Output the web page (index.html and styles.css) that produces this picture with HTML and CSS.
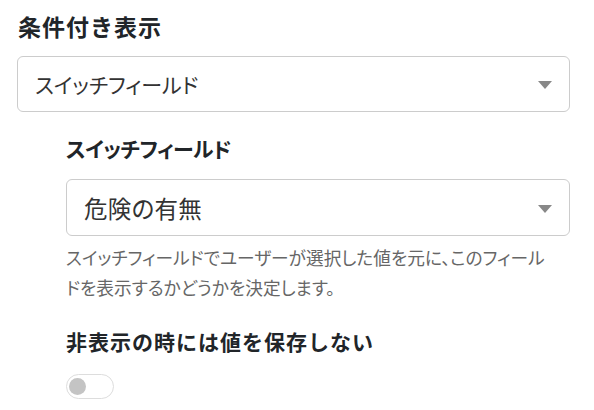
FILE: index.html
```html
<!DOCTYPE html>
<html lang="ja">
<head>
<meta charset="utf-8">
<link rel="stylesheet" href="styles.css">
</head>
<body>
<div class="page">
  <div class="title">条件付き表示</div>
  <div class="select">
    <span class="select-text">スイッチフィールド</span>
    <span class="caret"></span>
  </div>
  <div class="nested">
    <div class="label label-2">スイッチフィールド</div>
    <div class="select select-2">
      <span class="select-text select-text-kanji">危険の有無</span>
      <span class="caret"></span>
    </div>
    <p class="help">スイッチフィールドでユーザーが選択した値を元に、このフィールドを表示するかどうかを決定します。</p>
    <div class="label label-3">非表示の時には値を保存しない</div>
    <div class="toggle"><span class="knob"></span></div>
  </div>
</div>
</body>
</html>
```
FILE: styles.css
```css
* { box-sizing: border-box; }
body {
  margin: 0;
  background: #fff;
  font-family: "Noto Sans CJK JP", "Noto Sans", sans-serif;
  color: #212529;
}
.page {
  padding: 10px 24px 0 17px;
}
.title {
  font-size: 23px;
  font-weight: 700;
  line-height: 33px;
  letter-spacing: 1px;
  margin: 0 0 13px 1px;
}
.select {
  height: 56px;
  border: 1px solid #ccc;
  border-radius: 6px;
  display: flex;
  align-items: center;
  justify-content: space-between;
  padding: 0 17px 0 17px;
}
.select-text {
  font-size: 21px;
  font-feature-settings: "palt";
  color: #333;
}
.select-text-kanji {
  font-size: 23.5px;
  letter-spacing: 0.3px;
}
.caret {
  width: 0;
  height: 0;
  border-left: 7px solid transparent;
  border-right: 7px solid transparent;
  border-top: 8px solid #888;
  margin-top: 2px;
}
.nested {
  margin-left: 49px;
}
.label {
  font-size: 21px;
  font-weight: 700;
  line-height: 32px;
}
.label-2 {
  font-feature-settings: "palt";
  letter-spacing: -0.6px;
  margin: 20px 0 15px 0;
}
.select-2 {
  height: 57px;
}
.help {
  font-size: 17.7px;
  line-height: 30px;
  color: #666;
  margin: 6px 0 0 0;
  max-width: 485px;
  font-feature-settings: "palt";
}
.label-3 {
  letter-spacing: 1px;
  margin: 23px 0 17px 0;
}
.toggle {
  width: 48px;
  height: 25px;
  border: 1px solid #ddd;
  border-radius: 13px;
  display: flex;
  align-items: center;
  padding-left: 2px;
}
.knob {
  width: 17px;
  height: 17px;
  border-radius: 50%;
  background: #c4c4c4;
}
```
